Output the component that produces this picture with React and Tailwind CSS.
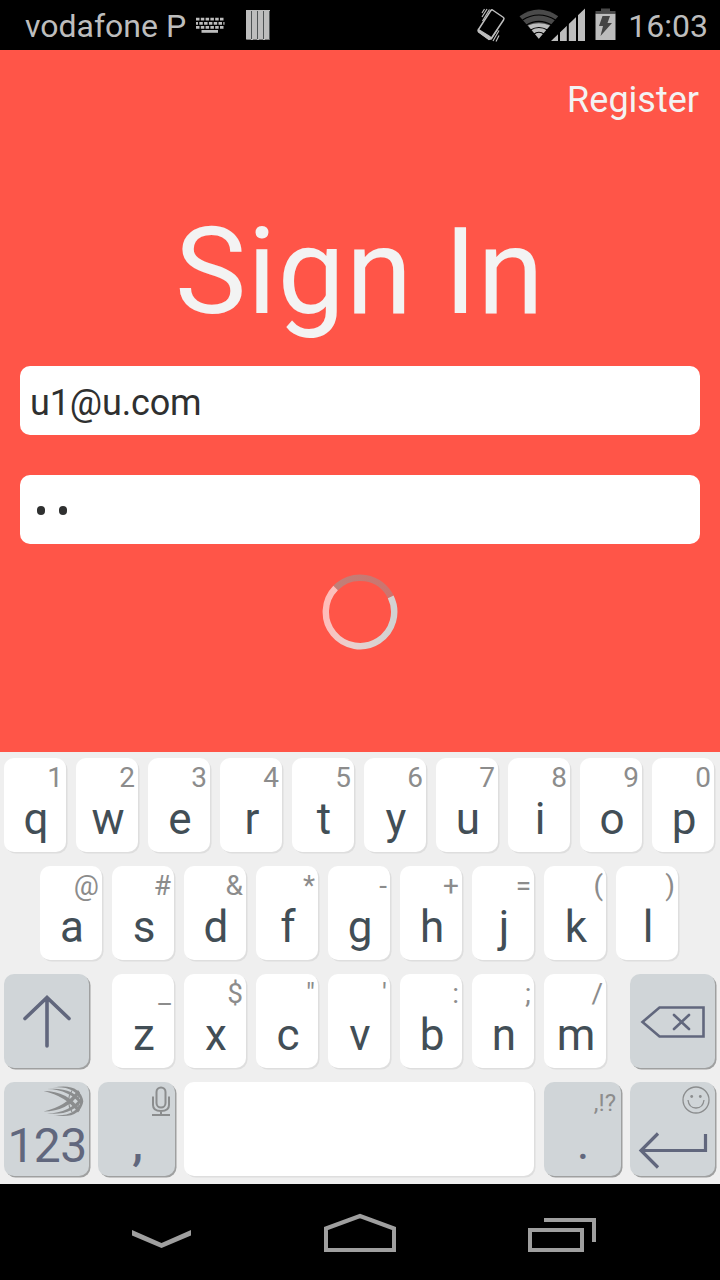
const hintText = "block h-[38px] pr-[3px] text-right text-[28px] leading-[40px] text-[#8c8c8c]";
const whiteKey = "h-[94px] rounded-[10px] bg-white shadow-[1.5px_1.5px_0_#dedede]";
const greyKey = "h-[94px] rounded-[10px] bg-[#d0d5d8] shadow-[1.5px_1.5px_0_#9fa0a0]";

function Key({ letter, hint }) {
  return (
    <button type="button" className={`w-[62px] shrink-0 flex flex-col items-stretch ${whiteKey}`}>
      <span className={hintText}>{hint}</span>
      <span className="block h-[46px] pl-[2px] text-center text-[44px] leading-[46px] text-[#424e56]">{letter}</span>
    </button>
  );
}

function Keys({ letters, hints }) {
  return (
    <div className="flex gap-[10px]">
      {letters.map((l, i) => (
        <Key key={l} letter={l} hint={hints[i]} />
      ))}
    </div>
  );
}

function StatusBar() {
  return (
    <header className="flex h-[50px] items-center bg-black pl-6 text-[32px] leading-[50px] text-[#bdbdbd]">
      <span className="w-[166px] pt-px pl-px whitespace-nowrap">vodafone P</span>
      <svg className="h-[50px] w-[90px]" viewBox="190 0 90 50">
        <g stroke="#bdbdbd" strokeWidth="2.8" fill="none">
          <path d="M196 19.2H224.5" strokeDasharray="3.500 1.300" />
          <path d="M196 23.3H224.5" strokeDasharray="3.500 1.300" strokeDashoffset="1.500" />
          <path d="M196 27.4H224.5" strokeDasharray="3.500 1.300" />
          <path d="M201.5 31.400H218" />
        </g>
        <g>
          <path d="M246 10h24v29l-1 1h-22l-1-1z" fill="#bdbdbd" />
          <path d="M251.5 11v28M257.5 11v28M263.5 11v28M269.5 11v28" stroke="#4e5254" strokeWidth="1" />
          <path d="M247 39.5h4M253 39.5h4M259 39.5h4M265 39.5h4" stroke="#777" strokeWidth="1" />
        </g>
      </svg>
      <svg className="ml-auto h-[50px] w-[150px]" viewBox="470 0 150 50">
        <g fill="none" stroke="#bdbdbd">
          <path d="M492.500 10L503.500 17.500Q504.500 18.500 503.500 20L491.500 38Q490 40 488 38.500L479 32Q477.500 31 478.500 29.500L490.500 11Q491.500 9.500 492.500 10Z" strokeWidth="1.5" />
          <path d="M478.500 29.500L489 36L491.500 38L489 39.500L478.500 32Z" fill="#bdbdbd" strokeWidth="1.200" />
          <path d="M482 17l5-8M482.500 21l7-11.500M484.500 9l-2.500 4M493 41l6-10.500M496 41.500l3-6M491 39.500l6.500-10" strokeWidth="1.200" />
        </g>
        <path d="M538.800 38.700L519.500 16.200Q538.800 3 558.200 16.200Z" fill="#4a4a4a" />
        <path d="M538.800 38.700L528 25.500Q538.800 21 550 25.500Z" fill="#bdbdbd" />
        <g fill="none" stroke="#000" strokeWidth="1.2">
          <path d="M522.500 20Q538.800 10 555.500 20" />
          <path d="M526 25.200Q538.800 17.500 552 25.200" />
          <path d="M530.500 30Q538.800 25 547.500 30" />
          <path d="M533.500 34.500Q538.800 30 544.500 34.500" />
        </g>
        <path d="M551 41L585 8.500V41Z" fill="#bdbdbd" />
        <path d="M559 8v33M567.800 8v33M577 8v33" stroke="#000" strokeWidth="2" />
        <path d="M595.500 13.500h20v26.500h-20z" fill="#bdbdbd" />
        <path d="M601 8.500h9v2.500h5.500v2.500h-20v-2.500h5.500z" fill="#4a4a4a" />
        <path d="M602.500 16h7.500l-2.500 7h4.500l-11.500 13 2.500-10h-4z" fill="#444" />
      </svg>
      <span className="w-[100px] pt-px pr-3 text-right">16:03</span>
    </header>
  );
}

function SignIn() {
  return (
    <main className="flex h-[702px] flex-col items-stretch bg-[#ff5548] px-5 text-[#f3f3f3]">
      <a className="mt-[25px] block h-[50px] self-end pr-px text-[36px] leading-[50px]">Register</a>
      <h1 className="mt-[77px] h-[140px] text-center text-[120px] leading-[140px] tracking-[1px]">Sign In</h1>
      <div className="mt-[24px] flex h-[69px] items-center rounded-[10px] bg-white pt-[6px] pl-[10px] text-[36px] leading-[63px] tracking-[-0.15px] text-[#2f3030]">u1@u.com</div>
      <div className="mt-10 flex h-[69px] items-center gap-[14px] rounded-[10px] bg-white pl-[17px]">
        <span className="mt-[2px] h-[9px] w-2 rounded-[4px] bg-[#2f3030]" />
        <span className="mt-[2px] h-[9px] w-2 rounded-[4px] bg-[#2f3030]" />
      </div>
      <svg className="mt-[30px] h-[76px] w-[76px] self-center" viewBox="-38 -38 76 76" fill="none" strokeWidth="6.400">
        <defs>
          <linearGradient id="light" gradientUnits="userSpaceOnUse" x1="34" y1="0" x2="-34" y2="-12">
            <stop stopColor="#d2d2d2" />
            <stop offset=".5" stopColor="#e8d2d0" />
            <stop offset="1" stopColor="#ffbcb9" />
          </linearGradient>
          <linearGradient id="dark" gradientUnits="userSpaceOnUse" x1="-25" y1="0" x2="31" y2="0">
            <stop stopColor="#c08079" />
            <stop offset="1" stopColor="#cd746e" />
          </linearGradient>
        </defs>
        <path d="M-24.400 -24A34.200 34.200 0 0 1 30.700 -15.100" stroke="url(#dark)" />
        <path d="M30.700 -15.100A34.200 34.200 0 1 1 -24.400 -24" stroke="url(#light)" />
      </svg>
    </main>
  );
}

function Keyboard() {
  return (
    <section className="flex h-[432px] flex-col gap-[14px] bg-[#efefef] pt-[6px] pl-1">
      <Keys letters={[..."qwertyuiop"]} hints={[..."1234567890"]} />
      <div className="pl-9">
        <Keys letters={[..."asdfghjkl"]} hints={[..."@#&*-+=()"]} />
      </div>
      <div className="flex">
        <button type="button" className={`mr-[23px] w-[85px] ${greyKey}`}>
          <svg className="h-[94px] w-[85px]" viewBox="4 974 85 94" fill="none" stroke="#61677d" strokeWidth="3.600" strokeLinecap="round">
            <path d="M47 1046V998M25 1018.500L47 997.500L69 1018.500" />
          </svg>
        </button>
        <Keys letters={[..."zxcvbnm"]} hints={["_", "$", '"', "'", ":", ";", "/"]} />
        <button type="button" className={`ml-6 w-[85px] ${greyKey}`}>
          <svg className="h-[94px] w-[85px]" viewBox="630 974 85 94" fill="none" stroke="#61677d" strokeWidth="2.600">
            <path d="M642.500 1022L659.500 1007.500H703.500V1036.500H659.500Z" />
            <path d="M674 1015L689 1029M689 1015L674 1029" strokeLinecap="round" />
          </svg>
        </button>
      </div>
      <div className="flex">
        <button type="button" className={`mr-[9px] flex w-[85px] flex-col ${greyKey}`}>
          <svg className="h-[38px] w-[85px]" viewBox="4 1082 85 38" fill="#8b8d8e">
            <path d="M53 1087.500Q80 1082.500 83.300 1101.200Q80 1120 53 1115Q76 1117 80.800 1101.200Q76 1086 53 1087.500Z" />
            <path d="M43.500 1091Q68 1091 80 1110L78 1112.500Q66 1096 43.500 1091Z" />
            <path d="M43.500 1111.500Q68 1111.500 80 1092.500L78 1090Q66 1106.500 43.500 1111.500Z" />
            <path d="M47 1089Q73 1086.500 82.500 1103L81.500 1105.500Q70 1089.500 47 1089Z" />
            <path d="M47 1113.500Q73 1116 82.500 1099.500L81.500 1097Q70 1113 47 1113.500Z" />
            <path d="M72 1090.500Q65 1101 72 1112M77.500 1091Q79.500 1101 77.500 1111.500" fill="none" stroke="#8b8d8e" strokeWidth="1.100" />
          </svg>
          <span className="block h-[50px] pl-px text-center text-[48px] leading-[52px] tracking-[-0.700px] text-[#61677d]">123</span>
        </button>
        <button type="button" className={`mr-[9px] flex w-[77px] flex-col ${greyKey}`}>
          <svg className="h-[38px] w-[77px]" viewBox="98 1082 77 38" fill="none" stroke="#8b8d8e" strokeWidth="2">
            <rect x="156.500" y="1087.500" width="9" height="20" rx="4.500" />
            <path d="M153 1096.500V1105Q153 1111 161 1111Q169 1111 169 1105V1096.500M161 1111V1115M152 1115H170" />
          </svg>
          <span className="block h-[46px] pl-[2px] text-center text-[48px] leading-[46px] font-medium text-[#61677d]">,</span>
        </button>
        <button type="button" aria-label="space" className={`mr-[10px] w-[350px] ${whiteKey}`} />
        <button type="button" className={`mr-[9px] flex w-[77px] flex-col ${greyKey}`}>
          <span className="block h-[38px] pr-[5px] text-right text-[24px] leading-[42px] text-[#8c8c8c]">,!?</span>
          <span className="block h-[46px] pl-px text-center text-[48px] leading-[46px] text-[#61677d]">.</span>
        </button>
        <button type="button" className={`w-[85px] ${greyKey}`}>
          <svg className="h-[94px] w-[85px]" viewBox="630 1082 85 94" fill="none">
            <g stroke="#8b8d8e" strokeWidth="1.300">
              <circle cx="696" cy="1100" r="13" />
              <path d="M688 1100Q689 1108 696 1108Q703 1108 704 1100" />
            </g>
            <circle cx="691.700" cy="1096.500" r="1.400" fill="#8b8d8e" />
            <circle cx="700.300" cy="1096.500" r="1.400" fill="#8b8d8e" />
            <path d="M705.500 1134V1150.500H641M658 1133.500L641 1150.500L658 1167.500" stroke="#61677d" strokeWidth="3.200" />
          </svg>
        </button>
      </div>
    </section>
  );
}

function NavBar() {
  return (
    <nav className="flex h-24 bg-black pl-[120px]">
      <svg className="h-24 w-20" viewBox="120 1184 80 96" fill="#9f9f9f">
        <path d="M132 1230L161.500 1243L191 1230V1235.500L161.500 1248L132 1235.500Z" />
      </svg>
      <svg className="ml-[120px] h-24 w-20" viewBox="320 1184 80 96" fill="none" stroke="#9f9f9f" strokeWidth="4">
        <path d="M326 1228.500L360 1216L394 1228.500V1250H326Z" />
      </svg>
      <svg className="ml-[120px] h-24 w-20" viewBox="520 1184 80 96" fill="none" stroke="#9f9f9f" strokeWidth="4">
        <path d="M530 1230H582V1250H530ZM544 1220H594V1242" />
      </svg>
    </nav>
  );
}

export default function App() {
  return (
    <div className="flex h-[1280px] w-[720px] flex-col overflow-hidden font-[Roboto,sans-serif]">
      <StatusBar />
      <SignIn />
      <Keyboard />
      <NavBar />
    </div>
  );
}
